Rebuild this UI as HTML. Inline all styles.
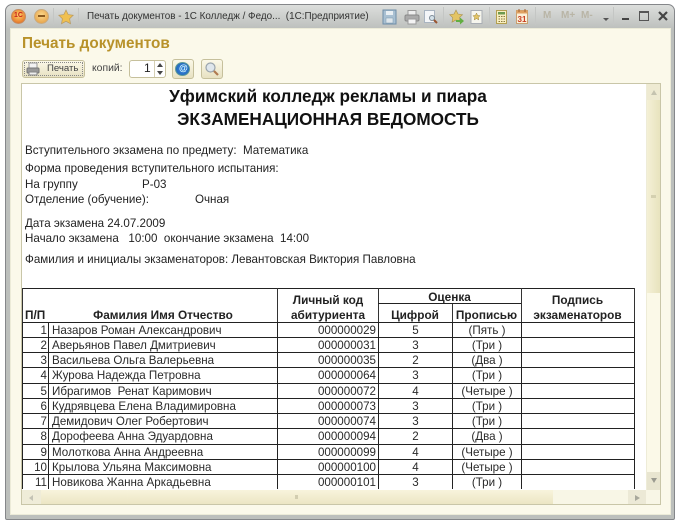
<!DOCTYPE html>
<html><head><meta charset="utf-8">
<style>
html,body{margin:0;padding:0;background:#fff;width:677px;height:524px;overflow:hidden}
body{position:relative;font-family:"Liberation Sans",sans-serif;color:#1a1a1a;filter:blur(.35px)}
div,span{position:absolute;white-space:nowrap}
.win{left:5px;top:4px;width:670px;height:516px;background:linear-gradient(#dcdedc,#bcbfbc 24px);border:1px solid #85878a;border-radius:7px 7px 2px 2px;box-sizing:border-box}
.in{left:10px;top:28px;width:661px;height:487px;background:#fbf9ea;border:1px solid #ecebd8;box-sizing:border-box}
.t{font-size:11.6px;line-height:13px;color:#222}
.frame{left:21px;top:83px;width:640px;height:422px;background:#fff;border:1px solid #c9c6a8;box-sizing:border-box;overflow:hidden}
.h{position:absolute;background:#222;height:1px}
.v{position:absolute;background:#333;width:1px}
.th{font-weight:bold;font-size:11.8px;line-height:13px;color:#222;text-align:center}
table{position:absolute;left:0;top:237.5px;width:612px;border-collapse:collapse;table-layout:fixed;font-size:11.6px;color:#2a2a2a}
td{border:1px solid #222;padding:2px 0 0;height:12.25px;line-height:12px;white-space:nowrap;text-align:center}
tr:last-child td{border-bottom:0}
td.n{text-align:right;padding-right:1px}
td.f{text-align:left;padding-left:3px}
td.k{text-align:right;padding-right:2px}
.btn{background:linear-gradient(#fbf8e8,#e7e1c2);border:1px solid #c6c09c;border-radius:3px;box-sizing:border-box}
.tb{color:#b9b5a6;font-size:10px;font-weight:bold}
</style></head><body>
<div class="win"></div>
<div class="in"></div>

<!-- title bar -->
<div style="left:11px;top:9px;width:15px;height:15px;border-radius:50%;background:radial-gradient(circle at 50% 40%,#ffd36a,#e8802f 70%,#c9582a);border:1px solid #c48c60;box-sizing:border-box"></div>
<div style="left:14px;top:12px;font-size:7px;font-weight:bold;color:#c8201c;line-height:8px">1С</div>
<div style="left:34px;top:9px;width:15px;height:15px;border-radius:50%;background:radial-gradient(circle at 50% 40%,#fbd98d,#e8a850 75%);border:1px solid #c9ab80;box-sizing:border-box"></div>
<div style="left:38px;top:15px;width:7px;height:2px;background:#8a5a20"></div>
<svg style="position:absolute;left:58px;top:9px" width="16" height="16" viewBox="0 0 16 16"><path d="M8 1l2.200 4.600 5 .7-3.600 3.400.9 5L8 12.300l-4.500 2.400.9-5L.8 6.300l5-.7z" fill="#f0c050" stroke="#b89a60" stroke-width=".7"/></svg>
<div style="left:53px;top:8px;width:1px;height:17px;background:#c4c6c4"></div>
<div style="left:78px;top:8px;width:1px;height:17px;background:#c4c6c4"></div>
<div style="left:87px;top:10px;font-size:9.9px;line-height:13px;color:#333">Печать документов - 1С Колледж / Федо... &nbsp;(1С:Предприятие)</div>

<!-- title bar icons -->
<svg style="position:absolute;left:382px;top:9px" width="16" height="16" viewBox="0 0 16 16"><rect x="1" y="1" width="13" height="14" fill="#a9c0d2" stroke="#6f8ea8"/><rect x="4" y="2" width="7" height="4" fill="#e9eff3"/><rect x="4" y="9" width="7" height="5" fill="#dfe7ec" stroke="#7b97ad" stroke-width=".5"/></svg>
<svg style="position:absolute;left:404px;top:9px" width="16" height="16" viewBox="0 0 16 16"><rect x="4" y="1.500" width="8" height="5" fill="#eee" stroke="#999"/><rect x="1" y="6" width="14" height="6" rx="1.500" fill="#aaa" stroke="#888"/><rect x="4" y="10" width="8" height="5" fill="#f3f3f3" stroke="#999"/></svg>
<svg style="position:absolute;left:423px;top:9px" width="16" height="16" viewBox="0 0 16 16"><rect x="1.500" y="1.500" width="10" height="12" fill="#f4f6f8" stroke="#a9b4c0"/><circle cx="9" cy="9" r="2.500" fill="#d5e2ea" stroke="#7d8b96"/><path d="M11 11l3 3" stroke="#9a5530" stroke-width="2"/></svg>
<div style="left:443px;top:7px;width:1px;height:18px;background:#c4c6c4"></div>
<svg style="position:absolute;left:449px;top:9px" width="16" height="16" viewBox="0 0 16 16"><path d="M7 1l2 4 4.500.7-3.200 3 .8 4.500L7 11l-4 2.200.8-4.500-3.200-3L5 5z" fill="#e3c465" stroke="#a89150" stroke-width=".6"/><path d="M7 11h4V8.500l4 3.500-4 3.500V13H7z" fill="#62ae42"/></svg>
<svg style="position:absolute;left:469px;top:9px" width="16" height="16" viewBox="0 0 16 16"><rect x="2" y="1.500" width="11" height="13" fill="#f6f6ee" stroke="#a9aeb4"/><path d="M7.500 4l1.100 2.400 2.500.3-1.800 1.700.5 2.500-2.300-1.300-2.300 1.300.5-2.500-1.800-1.700 2.500-.3z" fill="#e3c465" stroke="#a08a40" stroke-width=".5"/></svg>
<div style="left:489px;top:7px;width:1px;height:18px;background:#c4c6c4"></div>
<svg style="position:absolute;left:495px;top:9px" width="14" height="16" viewBox="0 0 14 16"><rect x="1.500" y="1.500" width="10" height="13" fill="#f8efc0" stroke="#b4a050"/><rect x="3" y="3" width="7" height="2.500" fill="#6d9a50"/><path d="M3.500 7.500h1.500M6 7.500h1.500M8.500 7.500h1.500M3.500 10h1.500M6 10h1.500M8.500 10h1.500M3.500 12.500h1.500M6 12.500h1.500M8.500 12.500h1.500" stroke="#8a7a40"/></svg>
<svg style="position:absolute;left:515px;top:8px" width="14" height="17" viewBox="0 0 14 17"><rect x="1.500" y="2.500" width="11" height="13" fill="#fbf0d8" stroke="#c7a070"/><rect x="1.500" y="2.500" width="11" height="3" fill="#e0a060"/><path d="M4 1v3M10 1v3" stroke="#a06030"/><text x="7" y="14" font-size="8" font-weight="bold" text-anchor="middle" fill="#c83c20" font-family="Liberation Sans">31</text></svg>
<div style="left:535px;top:7px;width:1px;height:18px;background:#c4c6c4"></div>
<div class="tb" style="left:543px;top:10px">M</div>
<div class="tb" style="left:561px;top:10px">M+</div>
<div class="tb" style="left:581px;top:10px">M-</div>
<div style="left:603px;top:18px;width:0;height:0;border:3px solid transparent;border-top:3px solid #555"></div>
<div style="left:613px;top:7px;width:1px;height:18px;background:#c4c6c4"></div>
<div style="left:622px;top:18px;width:7px;height:2px;background:#444"></div>
<div style="left:639px;top:11px;width:10px;height:10px;border:1px solid #555;border-top-width:2px;box-sizing:border-box"></div>
<svg style="position:absolute;left:658px;top:11px" width="10" height="10" viewBox="0 0 10 10"><path d="M1 1l8 8M9 1l-8 8" stroke="#444" stroke-width="2.200"/></svg>

<!-- heading and toolbar -->
<div style="left:22px;top:35px;font-size:15.3px;line-height:17px;font-weight:bold;color:#b8922a">Печать документов</div>
<div class="btn" style="left:22px;top:60px;width:63px;height:18px;outline:1px dotted #888;outline-offset:-3px"></div>
<svg style="position:absolute;left:26px;top:62px" width="14" height="14" viewBox="0 0 14 14"><rect x="3" y="1" width="8" height="5" fill="#f2f2f2" stroke="#999"/><rect x="1" y="6" width="12" height="5" rx="1" fill="#999" stroke="#777"/><rect x="3" y="10" width="8" height="3" fill="#eee" stroke="#888"/></svg>
<div style="left:47px;top:62px;font-size:9.6px;line-height:13px;color:#444">Печать</div>
<div style="left:92px;top:62px;font-size:10.400px;line-height:13px;color:#444">копий:</div>
<div style="left:129px;top:60px;width:37px;height:18px;background:#fff;border:1px solid #c6c09c;border-radius:3px;box-sizing:border-box"></div>
<div style="left:144px;top:61px;font-size:12px;line-height:14px;color:#222">1</div>
<div style="left:154px;top:61px;width:1px;height:16px;background:#d5d0b5"></div>
<div style="left:157px;top:63px;width:0;height:0;border:3px solid transparent;border-top:0;border-bottom:4px solid #444"></div>
<div style="left:157px;top:71px;width:0;height:0;border:3px solid transparent;border-bottom:0;border-top:4px solid #444"></div>
<div class="btn" style="left:172px;top:59px;width:22px;height:20px"></div>
<div style="left:175px;top:62px;width:15px;height:14px;border-radius:50%;background:radial-gradient(circle,#2f78d0 40%,#1c5fa8);border:1px solid #5c9a9a;box-sizing:border-box"></div>
<div style="left:179px;top:63px;font-size:9px;line-height:11px;font-weight:bold;color:#dff">@</div>
<div class="btn" style="left:201px;top:59px;width:22px;height:20px"></div>
<svg style="position:absolute;left:204px;top:61px" width="16" height="16" viewBox="0 0 16 16"><circle cx="6.500" cy="6.500" r="4.500" fill="#dfe6ec" stroke="#9aa4ac" stroke-width="1.200"/><path d="M10 10l4 4" stroke="#b07a50" stroke-width="2.200"/></svg>

<!-- report -->
<div class="frame">
  <div style="left:0;top:2px;width:612px;text-align:center;font-size:17.2px;line-height:20px;font-weight:bold;color:#111">Уфимский колледж рекламы и пиара</div>
  <div style="left:0;top:25px;width:612px;text-align:center;font-size:17.2px;line-height:20px;font-weight:bold;color:#111">ЭКЗАМЕНАЦИОННАЯ ВЕДОМОСТЬ</div>
  <div class="t" style="left:3px;top:60px">Вступительного экзамена по предмету: &nbsp;Математика</div>
  <div class="t" style="left:3px;top:78px">Форма проведения вступительного испытания:</div>
  <div class="t" style="left:3px;top:94px">На группу</div>
  <div class="t" style="left:120px;top:94px">Р-03</div>
  <div class="t" style="left:3px;top:109px">Отделение (обучение):</div>
  <div class="t" style="left:173px;top:109px">Очная</div>
  <div class="t" style="left:3px;top:133px">Дата экзамена 24.07.2009</div>
  <div class="t" style="left:3px;top:148px">Начало экзамена &nbsp;&nbsp;10:00 &nbsp;окончание экзамена &nbsp;14:00</div>
  <div class="t" style="left:3px;top:169px">Фамилия и инициалы экзаменаторов: Левантовская Виктория Павловна</div>

  <div class="h" style="left:0;top:204px;width:612px"></div>
  <div class="v" style="left:0;top:204px;height:34px"></div>
  <div class="v" style="left:255px;top:204px;height:34px"></div>
  <div class="v" style="left:356px;top:204px;height:34px"></div>
  <div class="v" style="left:430px;top:220px;height:18px"></div>
  <div class="v" style="left:499px;top:204px;height:34px"></div>
  <div class="v" style="left:612px;top:204px;height:34px"></div>
  <div class="h" style="left:356px;top:219px;width:143px"></div>
  <div class="th" style="left:3px;top:225px">П/П</div>
  <div class="th" style="left:27px;top:225px;width:228px">Фамилия Имя Отчество</div>
  <div class="th" style="left:256px;top:210px;width:100px">Личный код</div>
  <div class="th" style="left:256px;top:225px;width:100px">абитуриента</div>
  <div class="th" style="left:356px;top:207px;width:143px">Оценка</div>
  <div class="th" style="left:356px;top:225px;width:74px">Цифрой</div>
  <div class="th" style="left:430px;top:225px;width:69px">Прописью</div>
  <div class="th" style="left:499px;top:210px;width:113px">Подпись</div>
  <div class="th" style="left:499px;top:225px;width:113px">экзаменаторов</div>

  <table>
    <colgroup><col style="width:26px"><col style="width:229px"><col style="width:101px"><col style="width:74px"><col style="width:69px"><col style="width:113px"></colgroup>
    <tr><td class="n">1</td><td class="f">Назаров Роман Александрович</td><td class="k">000000029</td><td>5</td><td>(Пять )</td><td></td></tr>
    <tr><td class="n">2</td><td class="f">Аверьянов Павел Дмитриевич</td><td class="k">000000031</td><td>3</td><td>(Три )</td><td></td></tr>
    <tr><td class="n">3</td><td class="f">Васильева Ольга Валерьевна</td><td class="k">000000035</td><td>2</td><td>(Два )</td><td></td></tr>
    <tr><td class="n">4</td><td class="f">Журова Надежда Петровна</td><td class="k">000000064</td><td>3</td><td>(Три )</td><td></td></tr>
    <tr><td class="n">5</td><td class="f">Ибрагимов &nbsp;Ренат Каримович</td><td class="k">000000072</td><td>4</td><td>(Четыре )</td><td></td></tr>
    <tr><td class="n">6</td><td class="f">Кудрявцева Елена Владимировна</td><td class="k">000000073</td><td>3</td><td>(Три )</td><td></td></tr>
    <tr><td class="n">7</td><td class="f">Демидович Олег Робертович</td><td class="k">000000074</td><td>3</td><td>(Три )</td><td></td></tr>
    <tr><td class="n">8</td><td class="f">Дорофеева Анна Эдуардовна</td><td class="k">000000094</td><td>2</td><td>(Два )</td><td></td></tr>
    <tr><td class="n">9</td><td class="f">Молоткова Анна Андреевна</td><td class="k">000000099</td><td>4</td><td>(Четыре )</td><td></td></tr>
    <tr><td class="n">10</td><td class="f">Крылова Ульяна Максимовна</td><td class="k">000000100</td><td>4</td><td>(Четыре )</td><td></td></tr>
    <tr><td class="n">11</td><td class="f">Новикова Жанна Аркадьевна</td><td class="k">000000101</td><td>3</td><td>(Три )</td><td></td></tr>
  </table>

  <!-- vertical scrollbar -->
  <div style="left:624px;top:0;width:15px;height:406px;background:#fbf9e8"></div>
  <div style="left:624px;top:0;width:15px;height:406px;border-left:1px solid #eeecd8;box-sizing:border-box"></div>
  <div style="left:625px;top:0;width:14px;height:16px;background:#eeead2"></div>
  <div style="left:629px;top:6px;width:0;height:0;border:3px solid transparent;border-top:0;border-bottom:5px solid #c5c3b0"></div>
  <div style="left:625px;top:16px;width:14px;height:193px;background:linear-gradient(90deg,#f4f0d6,#e7e2bc)"></div>
  <div style="left:629px;top:111px;width:5px;height:3px;background:#d4d0b0"></div>
  <div style="left:625px;top:388px;width:14px;height:18px;background:#e8e5d0"></div>
  <div style="left:629px;top:394px;width:0;height:0;border:3px solid transparent;border-bottom:0;border-top:5px solid #9a9a90"></div>
  <!-- horizontal scrollbar -->
  <div style="left:0;top:406px;width:638px;height:15px;background:#f8f6e6"></div>
  <div style="left:0;top:406px;width:19px;height:15px;background:#efecd8"></div>
  <div style="left:7px;top:411px;width:0;height:0;border:3px solid transparent;border-left:0;border-right:4px solid #c4c3b5"></div>
  <div style="left:19px;top:406px;width:512px;height:15px;background:linear-gradient(#f8f4dc,#ebe5c2)"></div>
  <div style="left:273px;top:411px;width:3px;height:4px;background:#d2cdb0"></div>
  <div style="left:606px;top:406px;width:18px;height:15px;background:#ece9d6"></div>
  <div style="left:613px;top:411px;width:0;height:0;border:3px solid transparent;border-right:0;border-left:5px solid #a8a89c"></div>
</div>
</body></html>
